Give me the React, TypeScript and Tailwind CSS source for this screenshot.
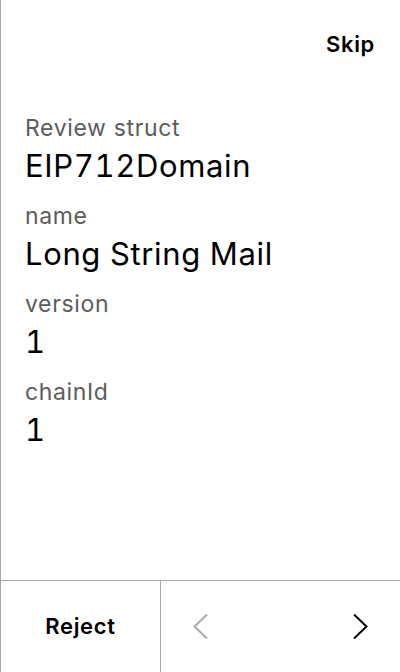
import React from "react";

const fields = [
  { label: "Review struct", value: "EIP712Domain" },
  { label: "name", value: "Long String Mail" },
  { label: "version", value: "1" },
  { label: "chainId", value: "1" },
];

function Chevron({ dir, className }: { dir: "left" | "right"; className?: string }) {
  return (
    <svg width="15" height="25" viewBox="0 0 15 25" fill="none" className={className}>
      <path
        d={dir === "left" ? "M14 0.5 L1.5 12.5 L14 24.5" : "M1 0.5 L13.5 12.5 L1 24.5"}
        stroke="currentColor"
        strokeWidth="2"
      />
    </svg>
  );
}

export default function App() {
  return (
    <div
      className="w-[400px] h-[672px] bg-white border-l border-[#a8a8a8] flex flex-col text-black tracking-[0.04em]"
      style={{ fontFamily: "Inter, 'Noto Sans', sans-serif" }}
    >
      <div className="flex justify-end pt-[30px] pr-[25px]">
        <button className="text-[22px] leading-[28px] font-semibold">Skip</button>
      </div>

      <div className="flex-1 px-6 pt-[52px] flex flex-col gap-3">
        {fields.map((f) => (
          <div key={f.label} className="flex flex-col">
            <div className="text-[23px] leading-[36px] text-[#5c5c5c]">{f.label}</div>
            <div className="text-[31px] leading-[40px] tabular-nums">{f.value}</div>
          </div>
        ))}
      </div>

      <div className="h-[92px] border-t border-[#a8a8a8] flex">
        <button className="w-[160px] border-r border-[#a8a8a8] flex items-center justify-center text-[22px] font-semibold">
          Reject
        </button>
        <div className="flex-1 flex items-center justify-between pl-[32px] pr-[32px]">
          <Chevron dir="left" className="text-[#aaaaaa]" />
          <Chevron dir="right" className="text-black" />
        </div>
      </div>
    </div>
  );
}
